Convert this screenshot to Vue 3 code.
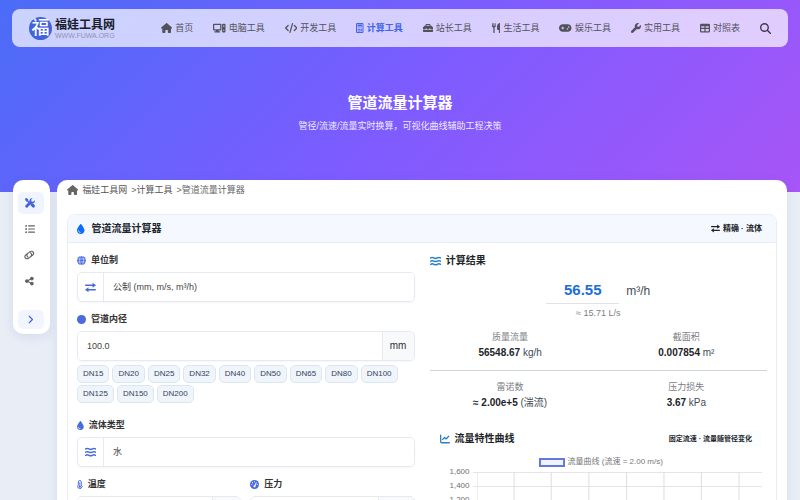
<script setup>
import { h, ref } from 'vue'

const icons = {
  home: [576, '<path d="M575.8 255.5c0 18-15 32.1-32 32.1h-32l.7 160.2v24.3c0 22.1-17.9 40-40 40H392c-22.1 0-40-17.9-40-40V384c0-17.7-14.3-32-32-32h-64c-17.7 0-32 14.3-32 32v88c0 22.1-17.9 40-40 40h-79.5c-22.1 0-40-17.9-40-40V287.600H32c-18 0-32-14-32-32.1 0-9 3-17 10-24L266.400 8c7-7 15-8 22-8s15 2 21 7l255.400 224.500c8 7 12 15 11 24z"/>'],
  computer: [640, '<path fill-rule="evenodd" d="M48 32h336a48 48 0 0 1 48 48v256a48 48 0 0 1-48 48H280l10 40h50a28 28 0 0 1 0 56H92a28 28 0 0 1 0-56h50l10-40H48a48 48 0 0 1-48-48V80a48 48 0 0 1 48-48zm16 64v224h304V96zM512 32h80a48 48 0 0 1 48 48v352a48 48 0 0 1-48 48h-80a48 48 0 0 1-48-48V80a48 48 0 0 1 48-48zm8 64v36h64V96zm0 76v36h64v-36zm32 164a32 32 0 1 0 0 64 32 32 0 0 0 0-64z"/>'],
  code: [640, '<path fill="none" stroke="currentColor" stroke-width="64" stroke-linecap="round" stroke-linejoin="round" d="M160 128 32 256l128 128M480 128l128 128-128 128M384 32 256 480"/>'],
  calc: [384, '<path fill="none" stroke="currentColor" stroke-width="54" d="M64 27h256q37 0 37 37v384q0 37-37 37H64q-37 0-37-37V64q0-37 37-37z"/><path d="M80 80h224v100H80zM88 225h55v50H88zm76 0h55v50h-55zm76 0h55v50h-55zM88 305h55v50H88zm76 0h55v50h-55zm76 0h55v130h-55zM88 385h131v50H88z"/>'],
  toolbox: [512, '<path fill-rule="evenodd" d="M176 56h160a48 48 0 0 1 48 48v40h28c13 0 25 5 34 14l52 52c9 9 14 21 14 34v60H384v-24h-64v24H192v-24h-64v24H0v-60c0-13 5-25 14-34l52-52c9-9 21-14 34-14h28v-40a48 48 0 0 1 48-48zm0 48v40h160v-40zM0 336h128v28h64v-28h128v28h64v-28h128v80a48 48 0 0 1-48 48H48a48 48 0 0 1-48-48z"/>'],
  utensils: [448, '<path d="M16 0h25l10 150h18L80 0h30l11 150h18L149 0h27l16 144c0 51-25 80-60 92v244a32 32 0 0 1-64 0V236C28 224 0 195 0 144zM416 0v480a32 32 0 0 1-64 0V352h-32c-35 0-64-29-64-64V176C256 70 350 0 416 0z"/>'],
  gamepad: [640, '<path fill-rule="evenodd" d="M192 64C86 64 0 150 0 256s86 192 192 192h256c106 0 192-86 192-192S554 64 448 64zM496 168a40 40 0 1 1 0 80 40 40 0 1 1 0-80zM392 304a40 40 0 1 1 80 0 40 40 0 1 1-80 0zM168 200a24 24 0 0 1 48 0v32h32a24 24 0 0 1 0 48h-32v32a24 24 0 0 1-48 0v-32h-32a24 24 0 0 1 0-48h32z"/>'],
  wrench: [512, '<path d="M352 320c88.400 0 160-71.600 160-160 0-15.300-2.200-30.100-6.200-44.200-3.100-10.800-16.400-13.200-24.300-5.300l-76.800 76.800c-3 3-7.100 4.700-11.300 4.700H336c-8.800 0-16-7.200-16-16v-57.400c0-4.200 1.700-8.300 4.700-11.300l76.800-76.800c7.900-7.900 5.400-21.200-5.300-24.300C382.100 2.200 367.300 0 352 0 263.600 0 192 71.600 192 160c0 19.100 3.400 37.500 9.500 54.500L19.900 396.100C7.200 408.800 0 426.100 0 444.100 0 481.600 30.400 512 67.900 512c18 0 35.300-7.200 48-19.900l181.600-181.600c17 6.200 35.400 9.500 54.500 9.500z"/>'],
  table: [512, '<path fill-rule="evenodd" d="M64 32h384a64 64 0 0 1 64 64v320a64 64 0 0 1-64 64H64a64 64 0 0 1-64-64V96a64 64 0 0 1 64-64zm0 128v88h160v-88zm224 0v88h160v-88zM64 312v104h160V312zm224 0v104h160V312z"/>'],
  search: [512, '<path fill-rule="evenodd" d="M416 208c0 45.900-14.900 88.300-40 122.700l126.600 126.700a32 32 0 0 1-45.300 45.300L330.700 376C296.300 401.200 253.900 416 208 416 93.100 416 0 322.900 0 208S93.100 0 208 0s208 93.100 208 208zM208 352a144 144 0 1 0 0-288 144 144 0 1 0 0 288z"/>'],
  tools: [512, '<path d="M20 12 72 0l90 70v62l82 82-50 50-82-82H60L0 72z"/><path d="m282 304 48-48c38-3 68 10 90 32l72 74c54 54-36 184-110 110l-76-76c-20-20-32-56-24-92z"/><path d="M500 110c34 106-66 198-164 164L140 470c-66 82-176-14-108-96l194-194C202 74 302-16 394 14l-78 80 18 82 84 18z"/>'],
  list: [512, '<circle cx="56" cy="96" r="46"/><circle cx="56" cy="256" r="46"/><circle cx="56" cy="416" r="46"/><path fill="none" stroke="currentColor" stroke-width="56" stroke-linecap="round" d="M186 96h298M186 256h298M186 416h298"/>'],
  link: [640, '<g fill="none" stroke="currentColor" stroke-width="58" stroke-linecap="round" transform="rotate(12 320 256)"><path d="M275 375c-80-40-96-122-44-184l76-92C424-30 590 96 496 216l-56 72"/><path d="M365 137c80 40 96 122 44 184l-76 92C216 542 50 416 144 296l56-72"/></g>'],
  share: [448, '<path d="M352 224c53 0 96-43 96-96s-43-96-96-96-96 43-96 96c0 4 .2 8 .7 11.900l-94.100 47C145.400 170.200 121.900 160 96 160c-53 0-96 43-96 96s43 96 96 96c25.900 0 49.400-10.200 66.600-26.900l94.100 47c-.5 3.900-.7 7.800-.7 11.900 0 53 43 96 96 96s96-43 96-96-43-96-96-96c-25.900 0-49.400 10.200-66.600 26.900l-94.100-47c.5-3.900.7-7.800.7-11.900s-.2-8-.7-11.900l94.100-47C302.600 213.800 326.100 224 352 224z"/>'],
  chevron: [320, '<path fill="none" stroke="currentColor" stroke-width="64" stroke-linecap="round" stroke-linejoin="round" d="m70 70 184 186L70 442"/>'],
  drop: [384, '<path fill-rule="evenodd" d="M192 512C86 512 0 426 0 320 0 228.800 130.200 57.700 166.600 11.700a32 32 0 0 1 50.800 0C253.800 57.700 384 228.800 384 320c0 106-86 192-192 192zM96 336a16 16 0 0 0-32 0c0 61.900 50.100 112 112 112a16 16 0 0 0 0-32c-44.200 0-80-35.800-80-80z"/>'],
  globe: [512, '<circle cx="256" cy="256" r="256"/><g fill="none" stroke="#fff" stroke-width="28"><ellipse cx="256" cy="256" rx="112" ry="262"/><path d="M0 176h512M0 336h512"/></g>'],
  swap: [512, '<path fill="none" stroke="currentColor" stroke-width="64" stroke-linecap="round" d="M32 150h350M130 362h350"/><path d="m350 34 150 102q14 14 0 28L350 266zM162 246 12 348q-14 14 0 28l150 102z"/>'],
  circle: [512, '<circle cx="256" cy="256" r="256"/>'],
  water: [576, '<path fill="none" stroke="currentColor" stroke-width="76" stroke-linecap="round" d="M34 100q80-50 170 0t170 0 168 0M34 262q80-50 170 0t170 0 168 0M34 424q80-50 170 0t170 0 168 0"/>'],
  thermo: [320, '<path fill="none" stroke="currentColor" stroke-width="54" d="M75 112a85 85 0 0 1 170 0v165a125 125 0 1 1-170 0z"/><path d="M134 130h52v176a66 66 0 1 1-52 0z"/>'],
  gauge: [512, '<circle cx="256" cy="256" r="256"/><g fill="#fff"><circle cx="145" cy="150" r="32"/><circle cx="256" cy="96" r="32"/><circle cx="98" cy="256" r="32"/><circle cx="414" cy="256" r="32"/><circle cx="256" cy="360" r="62"/><path d="m235 340 108-215 42 22-92 225z"/></g>'],
  chart: [512, '<path fill="none" stroke="currentColor" stroke-width="66" stroke-linecap="round" stroke-linejoin="round" d="M34 64v336q0 48 48 48h396M128 288l108-108 72 72 138-138"/>'],
}

const Icon = (props) => {
  const [width, markup] = icons[props.name]
  return h('svg', { viewBox: `0 0 ${width} 512`, fill: 'currentColor', 'aria-hidden': 'true', innerHTML: markup })
}
Icon.props = ['name']

const nav = [
  ['home', '首页'], ['computer', '电脑工具'], ['code', '开发工具'], ['calc', '计算工具'],
  ['toolbox', '站长工具'], ['utensils', '生活工具'], ['gamepad', '娱乐工具'],
  ['wrench', '实用工具'], ['table', '对照表'],
]
const sizes = [15, 20, 25, 32, 40, 50, 65, 80, 100, 125, 150, 200]
const diameter = ref('100.0')
const columns = [0, 13, 26, 39.2, 52.4, 65.5, 78.600, 91.800]
</script>

<template>
  <div class="page">
    <div class="hero">
      <header class="topbar">
        <a class="logo" href="#">
          <span class="logo-mark">福</span>
          <span class="logo-words"><strong>福娃工具网</strong><small>WWW.FUWA.ORG</small></span>
        </a>
        <nav class="nav">
          <a v-for="[icon, label] in nav" :key="label" href="#" :class="{ active: icon === 'calc' }">
            <Icon :name="icon" class="icon" />{{ label }}
          </a>
          <button class="search" type="button"><Icon name="search" class="icon-l" /></button>
        </nav>
      </header>
      <h1>管道流量计算器</h1>
      <p>管径/流速/流量实时换算，可视化曲线辅助工程决策</p>
    </div>

    <div class="content">
      <aside class="side">
        <button class="on" type="button"><Icon name="tools" class="icon" /></button>
        <button type="button"><Icon name="list" class="icon" /></button>
        <button type="button"><Icon name="link" class="icon" /></button>
        <button type="button"><Icon name="share" class="icon" /></button>
        <button class="more" type="button"><Icon name="chevron" class="icon-s" /></button>
      </aside>

      <main class="main">
        <div class="crumbs">
          <Icon name="home" class="icon" />
          <a href="#">福娃工具网</a>
          <span>&gt;<a href="#">计算工具</a></span>
          <span>&gt;管道流量计算器</span>
        </div>

        <section class="card">
          <div class="card-head">
            <h2><Icon name="drop" class="icon" />管道流量计算器</h2>
            <span class="tag"><Icon name="swap" class="icon-s" />精确 · 流体</span>
          </div>
          <div class="card-body">
            <form class="form" @submit.prevent>
              <div class="field">
                <label for="unit"><Icon name="globe" class="icon-s" />单位制</label>
                <div class="group">
                  <span class="lead"><Icon name="swap" class="icon-l" /></span>
                  <select id="unit"><option>公制 (mm, m/s, m³/h)</option></select>
                </div>
              </div>
              <div class="field">
                <label for="diameter"><Icon name="circle" class="icon-s" />管道内径</label>
                <div class="group">
                  <input id="diameter" v-model="diameter" type="text">
                  <span class="unit">mm</span>
                </div>
                <div class="chips">
                  <button v-for="s in sizes" :key="s" type="button" @click="diameter = s.toFixed(1)">DN{{ s }}</button>
                </div>
              </div>
              <div class="field">
                <label for="fluid"><Icon name="drop" class="icon-s" />流体类型</label>
                <div class="group">
                  <span class="lead"><Icon name="water" class="icon" /></span>
                  <select id="fluid"><option>水</option></select>
                </div>
              </div>
              <div class="pair">
                <div class="field">
                  <label for="temp"><Icon name="thermo" class="icon-s" />温度</label>
                  <div class="group"><input id="temp" type="text"><span class="unit"></span></div>
                </div>
                <div class="field">
                  <label for="pressure"><Icon name="gauge" class="icon-s" />压力</label>
                  <div class="group"><input id="pressure" type="text"><span class="unit wide"></span></div>
                </div>
              </div>
            </form>

            <div class="results">
              <h3><Icon name="water" class="icon" />计算结果</h3>
              <div class="flow"><strong>56.55</strong><span>m³/h</span></div>
              <div class="alt">≈ 15.71 L/s</div>
              <dl class="stats">
                <div><dt>质量流量</dt><dd><b>56548.67</b> kg/h</dd></div>
                <div><dt>截面积</dt><dd><b>0.007854</b> m²</dd></div>
              </dl>
              <hr>
              <dl class="stats">
                <div><dt>雷诺数</dt><dd><b>≈ 2.00e+5</b> (湍流)</dd></div>
                <div><dt>压力损失</dt><dd><b>3.67</b> kPa</dd></div>
              </dl>
              <div class="chart">
                <div class="chart-head">
                  <h3><Icon name="chart" class="icon" />流量特性曲线</h3>
                  <span class="note">固定流速 · 流量随管径变化</span>
                </div>
                <div class="legend"><i></i>流量曲线 (流速 = 2.00 m/s)</div>
                <div class="plot">
                  <div class="axis"><span>1,600</span><span>1,400</span><span>1,200</span></div>
                  <div class="grid">
                    <div class="row"></div><div class="row"></div><div class="row"></div>
                    <svg class="lines" aria-hidden="true">
                      <line v-for="x in columns" :key="x" :x1="x + '%'" :x2="x + '%'" y1="0" y2="100%" />
                    </svg>
                  </div>
                </div>
              </div>
            </div>
          </div>
        </section>
      </main>
    </div>
  </div>
</template>

<style>
body { margin: 0; background: #e9eef6; }
</style>

<style scoped>
* { box-sizing: border-box; }
.page {
  height: 100vh;
  overflow: hidden;
  font: 9px/14px "Liberation Sans", "Noto Sans CJK SC", sans-serif;
  color: #444b55;
}
a { color: inherit; text-decoration: none; }
button { padding: 0; border: 0; background: none; color: inherit; font: inherit; cursor: pointer; }
h1, h2, h3, p, dl, dd { margin: 0; }
svg { flex: none; }
.icon { height: 10px; }
.icon-s { height: 9px; }
.icon-l { height: 11px; }

.hero {
  height: 192px;
  padding: 9px 12px;
  background: linear-gradient(135deg, #4a6cf7, #7c5cff 50%, #a855f7);
  color: #fff;
  text-align: center;
}
.topbar {
  display: flex;
  align-items: center;
  height: 38px;
  padding: 0 17px;
  border-radius: 8px;
  background: rgba(255, 255, 255, .7);
  color: #52525b;
}
.logo { display: flex; align-items: center; gap: 3px; margin-right: 46px; }
.logo-mark {
  width: 23px;
  height: 23px;
  border-radius: 50%;
  background: #4263dc;
  color: #fff;
  font-size: 18px;
  font-weight: 500;
  line-height: 23px;
}
.logo-words { display: flex; flex-direction: column; text-align: left; }
.logo-words strong { font-size: 12px; line-height: 14px; color: #181c2b; }
.logo-words small { font-size: 7px; line-height: 7px; color: #9291b4; }
.nav { flex: 1; display: flex; align-items: center; justify-content: space-between; }
.nav a { display: flex; align-items: center; gap: 3px; white-space: nowrap; }
.nav .active { color: #4263eb; font-weight: 700; }
.search { display: flex; color: #3c3452; }
h1 { margin-top: 45px; font-size: 15px; line-height: 22px; }
.hero p { margin-top: 5px; color: #efeaff; }

.content { display: flex; align-items: flex-start; gap: 7px; margin-top: -12px; padding: 0 13px; }
.side {
  display: flex;
  flex-direction: column;
  gap: 4px;
  width: 37px;
  padding: 12px 6px 5px 5px;
  border-radius: 10px;
  background: #fff;
  box-shadow: 0 3px 12px rgba(60, 80, 160, .12);
}
.side button {
  display: flex;
  align-items: center;
  justify-content: center;
  height: 22px;
  padding-right: 3px;
  border-radius: 5px;
  color: #5f6368;
}
.side .on { background: #f0f4ff; color: #4263dc; }
.side .more { height: 19px; margin-top: 14px; padding: 0; background: #f2f5ff; color: #4263dc; }
.main {
  flex: 1;
  min-width: 0;
  padding: 0 10px;
  border-radius: 10px;
  background: #fff;
  box-shadow: 0 3px 12px rgba(60, 80, 160, .1);
}
.crumbs { display: flex; align-items: center; gap: 4px; height: 20px; margin-bottom: 14px; color: #666; }
.crumbs a { color: #555; }

.card { border: 1px solid #e8edf8; border-radius: 8px; overflow: hidden; }
.card-head {
  display: flex;
  align-items: center;
  justify-content: space-between;
  height: 28px;
  padding: 0 14px 0 9px;
  border-bottom: 1px solid #e6edf8;
  background: #f5f8fe;
}
h2, h3 { display: flex; align-items: center; font-size: 10px; line-height: 14px; color: #212529; }
h2 { gap: 7px; }
h2 svg { color: #0d6efd; }
.tag { display: flex; align-items: center; gap: 3px; font-size: 8px; font-weight: 700; color: #212529; }
.card-body {
  display: grid;
  grid-template-columns: repeat(2, minmax(0, 1fr));
  gap: 15px;
  padding: 10px 9px;
}

.form { display: flex; flex-direction: column; gap: 10px; }
label { display: flex; align-items: center; gap: 5px; margin-bottom: 5px; font-weight: 700; color: #333; }
label svg { color: #4a6be0; }
.group {
  display: flex;
  height: 30px;
  border: 1px solid #e6e9ef;
  border-radius: 5px;
  overflow: hidden;
  box-shadow: 0 1px 2px rgba(0, 0, 0, .04);
}
.lead {
  display: flex;
  align-items: center;
  justify-content: center;
  width: 26px;
  border-right: 1px solid #e6e9ef;
  color: #4a6bd8;
}
.group select, .group input {
  flex: 1;
  min-width: 0;
  padding: 0 9px;
  border: 0;
  outline: 0;
  background: #fff;
  color: #444;
  font: inherit;
  appearance: none;
}
.unit {
  display: flex;
  align-items: center;
  justify-content: center;
  width: 32px;
  border-left: 1px solid #e6e9ef;
  background: #f8f9fa;
  font-size: 10px;
  color: #333;
}
.pair .unit { width: 28px; }
.pair .wide { width: 36px; }
.chips { display: flex; flex-wrap: wrap; gap: 2px 3px; margin: 4px 0 5px; }
.chips button {
  height: 18px;
  padding: 0 5px;
  border: 1px solid #dce6f2;
  border-radius: 5px;
  background: #f0f5fc;
  font-size: 8px;
  line-height: 16px;
  color: #34435a;
}
.pair { display: grid; grid-template-columns: repeat(2, minmax(0, 1fr)); gap: 9px; }

.results { display: flex; flex-direction: column; text-align: center; }
.results h3 { gap: 5px; }
.results h3 svg { color: #2680c8; }
.results > h3 { margin-top: 1px; }
.flow { display: flex; justify-content: center; align-items: center; gap: 7px; margin-top: 9px; font-size: 12px; }
.flow strong {
  width: 73px;
  padding: 3px 0;
  border-bottom: 1px solid #dfe3e8;
  font-size: 15px;
  line-height: 20px;
  color: #1c6fd6;
}
.alt { margin-top: 2px; color: #7c8085; }
.stats { display: grid; grid-template-columns: 1fr 1fr; gap: 15px; margin-top: 10px; }
.stats dt { line-height: 15px; color: #7c8085; }
.stats dd { font-size: 10px; line-height: 15px; }
.stats b { color: #212529; }
hr { width: 100%; margin: 10px 0 0; border: 0; border-top: 1px solid #cfd6d6; }
hr + .stats { margin-top: 9px; }
.chart { margin-top: 21px; padding: 0 5px 0 10px; }
.chart-head { display: flex; align-items: center; justify-content: space-between; }
.note { padding: 1px 10px 1px 5px; border-radius: 3px; background: #fcfdfe; font-size: 7px; font-weight: 700; color: #212529; }
.legend { display: flex; align-items: center; justify-content: center; gap: 3px; margin-top: 8px; font-size: 8px; color: #777; }
.legend i { width: 26px; height: 9px; border: 2px solid #6478de; background: #f0f3fe; }
.plot { display: flex; gap: 3px; margin-top: 3px; font-size: 8px; color: #707070; }
.axis { display: flex; flex-direction: column; margin-top: -7px; text-align: right; padding-left: 10px; }
.grid { flex: 1; position: relative; }
.row { height: 14px; border-top: 1px solid #e5e5e5; }
.lines { position: absolute; top: 0; left: 4px; width: calc(100% - 4px); height: 100%; stroke: #dedede; }
</style>
